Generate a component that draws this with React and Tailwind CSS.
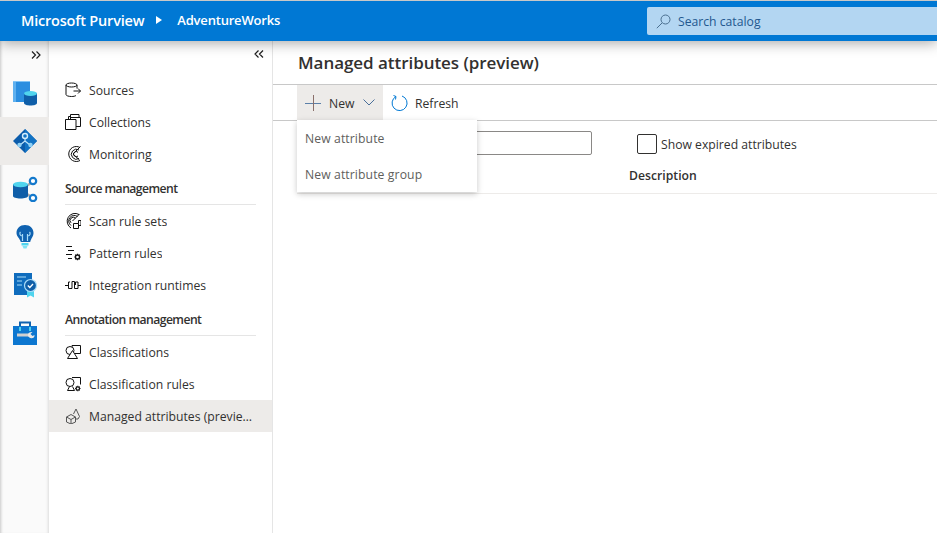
import React from "react";

const line = { fill: "none", stroke: "#111", strokeWidth: 1 };

const DoubleChevron = ({ flip }) => (
  <svg width="10" height="8" viewBox="0 0 10 8" fill="none" stroke="#1f1f1f" strokeWidth="1.200" className={flip ? "rotate-180" : ""}>
    <path d="M1 .5 4.500 4 1 7.500M5.500 .5 9 4 5.500 7.500" />
  </svg>
);

const SourcesIcon = () => (
  <svg width="16" height="16" viewBox="0 0 16 16" {...line}>
    <ellipse cx="6.500" cy="3" rx="5.500" ry="2" />
    <path d="M1 3v9.500c0 1.200 2.500 2 5.500 2 2 0 3.500-.3 4.500-1M12 3v3.500M8.500 9h7M13 6.500 15.500 9 13 11.500" />
  </svg>
);
const CollectionsIcon = () => (
  <svg width="16" height="16" viewBox="0 0 16 16" {...line}>
    <path d="M3.500 5.500V2.500h2M5.500 5.500V.5h8.500v3M.5 5.500h10.500v10H.5zM11 12.500h4.500v-9H5.500" />
  </svg>
);
const MonitoringIcon = () => (
  <svg width="16" height="16" viewBox="0 0 16 16" {...line}>
    <path d="M15 1.500A7.500 7.500 0 1 0 15 14.500M14 4a5 5 0 1 0 0 8.500M13 6.300A2.600 2.600 0 1 0 13 10" />
    <path d="M15.500 .5 8 8l6.500 6" />
  </svg>
);
const ScanIcon = () => (
  <svg width="16" height="16" viewBox="0 0 16 16" {...line}>
    <path d="M14 1.500A7.300 7.300 0 1 0 6 15M12.500 3.500A5 5 0 1 0 6 12.500M10.500 5.200A2.600 2.600 0 1 0 6 9.800M14.500 1 7.500 8" />
    <path d="M8.500 10.500h5v-3h2.500v5h-2.500M8.500 10.500v5h5v-5" />
  </svg>
);
const PatternIcon = () => (
  <svg width="16" height="16" viewBox="0 0 16 16" {...line}>
    <path d="M1 1.500h6M3 5.500h6M1 9.500h6M3 13.500h4" />
    <circle cx="12.500" cy="12" r="2" strokeWidth="1.300" />
    <path d="M12.500 8.800v1.200M12.500 14v1.200M9.300 12h1.200M14.500 12h1.200M10.200 9.700l1 1M13.800 13.300l1 1M14.800 9.700l-1 1M11.200 13.300l-1 1" strokeWidth="1.200" />
  </svg>
);
const RuntimeIcon = () => (
  <svg width="16" height="16" viewBox="0 0 16 16" {...line}>
    <path d="M0 8.500h3M3.500 5v6.500H7v-7h2.500v7H13V5h-2.500v3M13 8.500h3M3.500 5H5" />
  </svg>
);
const ClassIcon = () => (
  <svg width="16" height="16" viewBox="0 0 16 16" {...line}>
    <path d="M7 1.500h8.500v8H7z" />
    <circle cx="5" cy="6.500" r="4" fill="#fff" />
    <path d="M7.500 6.500 12.500 14.500h-10z" fill="#fff" />
  </svg>
);
const ClassRuleIcon = () => (
  <svg width="16" height="16" viewBox="0 0 16 16" {...line}>
    <path d="M7 1.500h8.500v7" />
    <circle cx="5" cy="6.500" r="4" fill="#fff" />
    <path d="M4.500 10.500l-2 4h7l-2-4" />
    <circle cx="12.800" cy="12.500" r="1.700" strokeWidth="1.200" />
    <path d="M12.800 9.800v1M12.800 14.200v1M10.100 12.500h1M14.500 12.500h1M10.900 10.600l.7.7M14 13.700l.7.7M14.700 10.600l-.7.7M11.600 13.700l-.7.7" strokeWidth="1.100" />
  </svg>
);
const ManagedIcon = () => (
  <svg width="16" height="16" viewBox="0 0 16 16" fill="none" stroke="#555" strokeWidth="1">
    <path d="M8.500 6 11 1l3.500 7.500-1.500 2.500h-2.500" />
    <path d="M1.500 9 6 6.500 10.500 9v5L6 16l-4.500-2z" />
    <path d="M1.500 9 6 11.500 10.500 9M6 11.500V16" />
  </svg>
);

const CatalogIcon = () => (
  <svg width="26" height="26" viewBox="0 0 26 26">
    <rect x="1" y="1" width="17" height="21" fill="#2b8ee0" />
    <rect x="1" y="1" width="3" height="21" fill="#5eb0ef" />
    <rect x="1" y="1" width="17" height="1" fill="#83c4f5" />
    <path d="M12 13h13v10c0 1.600-2.900 2.500-6.500 2.500S12 24.600 12 23z" fill="#0f5ea8" />
    <ellipse cx="18.500" cy="13.500" rx="6.500" ry="2.500" fill="#50d4ee" />
  </svg>
);
const MapIcon = () => (
  <svg width="26" height="26" viewBox="0 0 26 26">
    <path d="M13 1 25 13 13 25 1 13z" fill="#0b5cab" />
    <path d="M13 1 25 13 13 25z" fill="#1273c4" />
    <path d="M13 8v6M13 13l-5 4M13 13l5 4" stroke="#bfe3fa" strokeWidth="1.200" fill="none" />
    <circle cx="13" cy="8" r="2.500" fill="#1273c4" stroke="#d3ecfb" strokeWidth="1.400" />
    <circle cx="7.500" cy="17" r="2.200" fill="#8fd0f5" />
    <circle cx="18.500" cy="17" r="2.200" fill="#8fd0f5" />
  </svg>
);
const SharingIcon = () => (
  <svg width="26" height="26" viewBox="0 0 26 26">
    <path d="M15 9.500 21 6M15 18l6 4" stroke="#a8a8a8" strokeWidth="2.500" />
    <path d="M1 8h15v12c0 1.500-3.300 2.500-7.500 2.500S1 21.500 1 20z" fill="#0f5ea8" />
    <ellipse cx="8.500" cy="8.500" rx="7.500" ry="2.800" fill="#50d4ee" />
    <circle cx="21" cy="5" r="3.200" fill="#fff" stroke="#1479cc" strokeWidth="2.200" />
    <circle cx="21" cy="22" r="3.200" fill="#fff" stroke="#1479cc" strokeWidth="2.200" />
  </svg>
);
const InsightsIcon = () => (
  <svg width="26" height="26" viewBox="0 0 26 26">
    <path d="M13 1c5 0 8.500 3.500 8.500 8 0 3.800-2.600 5.500-3.300 9H8.800C8 14.500 4.500 12.800 4.500 9c0-4.500 3.500-8 8.500-8z" fill="#0f62b0" />
    <path d="M9.500 19h7v2.500h-7z" fill="#50d4ee" />
    <path d="M10.500 22h5l-1 2.500h-3z" fill="#7fe3f5" />
    <path d="M10.500 17V10M15.500 17V10M10.500 12c-3 0-3-3-2-4M15.500 12c3 0 3-3 2-4" stroke="#a9dcf8" strokeWidth="1.200" fill="none" />
  </svg>
);
const PolicyIcon = () => (
  <svg width="26" height="26" viewBox="0 0 26 26">
    <rect x="2" y="1" width="18" height="22" fill="#0f6cbd" />
    <path d="M5 5h9M5 9h5M5 13h5" stroke="#a9dcf8" strokeWidth="1.200" />
    <path d="M15 18v7.500l3.500-2 3.500 2V18z" fill="#50d4ee" />
    <circle cx="18.500" cy="13.500" r="6" fill="#0f5ea8" stroke="#a9dcf8" strokeWidth="1.200" />
    <path d="m15.800 13.500 2 2 3.200-3.500" stroke="#fff" strokeWidth="1.300" fill="none" />
  </svg>
);
const ToolboxIcon = () => (
  <svg width="24" height="24" viewBox="0 0 24 24">
    <path d="M7 5V1.500h10V5" fill="none" stroke="#0f62b0" strokeWidth="2" />
    <rect x="0" y="5" width="24" height="19" fill="#0d77d0" />
    <rect x="6" y="6" width="2" height="4" fill="#50d4ee" />
    <rect x="16" y="6" width="2" height="4" fill="#50d4ee" />
    <path d="M4 14h12" stroke="#d0d0d0" strokeWidth="3" />
    <path d="M15 14c0-2.200 2-3.300 4.500-3l-2 2 2 2 2-1c.2 2.500-1.500 3.500-3.500 3.200-1.800-.3-3-1.500-3-3.200z" fill="#e8e8e8" />
  </svg>
);

const railIcons = [
  { icon: <CatalogIcon />, className: "h-12" },
  { icon: <MapIcon />, className: "h-12 bg-[#edebe9]" },
  { icon: <SharingIcon />, className: "h-12" },
  { icon: <InsightsIcon />, className: "h-12" },
  { icon: <PolicyIcon />, className: "h-12" },
  { icon: <ToolboxIcon />, className: "h-12" },
];

const NavItem = ({ icon, label, active }) => (
  <div className={`flex h-8 items-center pr-[17px] pl-4 ${active ? "bg-[#edebe9]" : ""}`}>
    <span className="mr-2 flex w-4 shrink-0">{icon}</span>
    <span className="truncate pt-[2px]">{label}</span>
  </div>
);

const NavHeading = ({ children }) => (
  <div className="mx-4 flex h-[35px] items-center border-b border-[#e5e5e5] pt-1 font-semibold tracking-[-0.55px] text-[#323130]">
    {children}
  </div>
);

export default function App() {
  return (
    <div className="relative flex h-[533px] w-[937px] flex-col overflow-hidden bg-white font-['Open_Sans',sans-serif] text-[12.200px] text-[#323130]">
      <header className="relative z-20 flex h-[41px] shrink-0 items-center border-t border-[#c8c8c8] bg-[#0078d4] pl-[21px] text-white shadow-[0_2px_14px_rgba(0,0,0,0.35)]">
        <span className="text-[14.500px] font-semibold tracking-[-0.2px]">Microsoft Purview</span>
        <svg width="6" height="8" viewBox="0 0 6 8" className="mr-[15px] ml-[12px] mb-[2px]">
          <path d="M0 0l6 4-6 4z" fill="#fff" />
        </svg>
        <span className="text-[13px] font-semibold tracking-[-0.2px]">AdventureWorks</span>
        <div className="ml-auto flex h-7 w-[290px] items-center rounded-l-[2px] bg-[#b3d6f2] pl-[9px] text-[#23588f]">
          <svg width="15" height="15" viewBox="0 0 15 15" fill="none" stroke="#4a6f8f" strokeWidth="1">
            <circle cx="9.500" cy="5.500" r="4.500" />
            <path d="M6 9 .8 14.200" />
          </svg>
          <span className="ml-[7px] pt-[2px]">Search catalog</span>
        </div>
      </header>

      <div className="flex min-h-0 flex-1">
        <aside className="flex w-[49px] shrink-0 flex-col bg-[#fafafa] shadow-[inset_3px_0_3px_-2px_rgba(0,0,0,0.2),inset_-3px_0_3px_-2px_rgba(0,0,0,0.12)]">
          <div className="flex h-7 items-center justify-end pr-[8px]">
            <DoubleChevron />
          </div>
          {railIcons.map((item, i) => (
            <div key={i} className={`flex items-center justify-center pl-[1px] ${item.className}`}>
              {item.icon}
            </div>
          ))}
        </aside>

        <nav className="w-[224px] shrink-0 border-r border-[#e5e5e5]">
          <div className="flex h-[33px] items-start justify-end pt-[9px] pr-2">
            <DoubleChevron flip />
          </div>
          <NavItem icon={<SourcesIcon />} label="Sources" />
          <NavItem icon={<CollectionsIcon />} label="Collections" />
          <NavItem icon={<MonitoringIcon />} label="Monitoring" />
          <NavHeading>Source management</NavHeading>
          <NavItem icon={<ScanIcon />} label="Scan rule sets" />
          <NavItem icon={<PatternIcon />} label="Pattern rules" />
          <NavItem icon={<RuntimeIcon />} label="Integration runtimes" />
          <NavHeading>Annotation management</NavHeading>
          <NavItem icon={<ClassIcon />} label="Classifications" />
          <NavItem icon={<ClassRuleIcon />} label="Classification rules" />
          <NavItem icon={<ManagedIcon />} label="Managed attributes (preview)" active />
        </nav>

        <main className="relative min-w-0 flex-1">
          <h1 className="flex h-[44px] items-center border-b border-[#c8c8c8] pl-[25px] text-[17px] font-semibold tracking-[-0.05px]">
            Managed attributes (preview)
          </h1>
          <div className="flex h-[36px] items-center border-b border-[#c8c8c8] pl-6">
            <div className="flex h-full w-[86px] items-center bg-[#edebe9] pl-2">
              <svg width="16" height="16" viewBox="0 0 16 16" fill="none" strokeWidth="1">
                <path d="M0 8.500h16" stroke="#5b7fa8" />
                <path d="M8.500 0v16" stroke="#8a6f6a" />
              </svg>
              <span className="ml-2 pt-[3px]">New</span>
              <svg width="12" height="7" viewBox="0 0 12 7" fill="none" stroke="#4a6f9a" strokeWidth="1" className="ml-[9px]">
                <path d="M.5 .5 6 6l5.500-5.500" />
              </svg>
            </div>
            <svg width="18" height="18" viewBox="0 0 18 18" fill="none" stroke="#0078d4" strokeWidth="1" className="ml-2">
              <path d="M5 2.500A7.500 7.500 0 1 0 11 2M2.500 1.500 5 2.500l-.5 3" />
            </svg>
            <span className="ml-[6px] pt-[3px]">Refresh</span>
          </div>
          <div className="flex h-[46px] items-center pl-[24px]">
            <div className="-mt-[2px] h-6 w-[295px] rounded-[2px] border border-[#8a8886]" />
            <span className="ml-[45px] h-5 w-5 rounded-[2px] border border-[#323130]" />
            <span className="ml-1 pt-[2px]">Show expired attributes</span>
          </div>
          <div className="ml-[24px] flex h-[27px] items-center border-b border-[#edebe9] pb-[7px] pl-[332px] font-semibold tracking-[0.02px]">
            Description
          </div>

          <div className="absolute top-[79px] left-[24px] z-10 w-[180px] bg-white tracking-[0.1px] text-[#605e5c] shadow-[0_2px_6px_rgba(0,0,0,0.22)]">
            <div className="flex h-9 items-center pt-[2px] pl-2">New attribute</div>
            <div className="flex h-9 items-center pt-[2px] pl-2">New attribute group</div>
          </div>
        </main>
      </div>
    </div>
  );
}
